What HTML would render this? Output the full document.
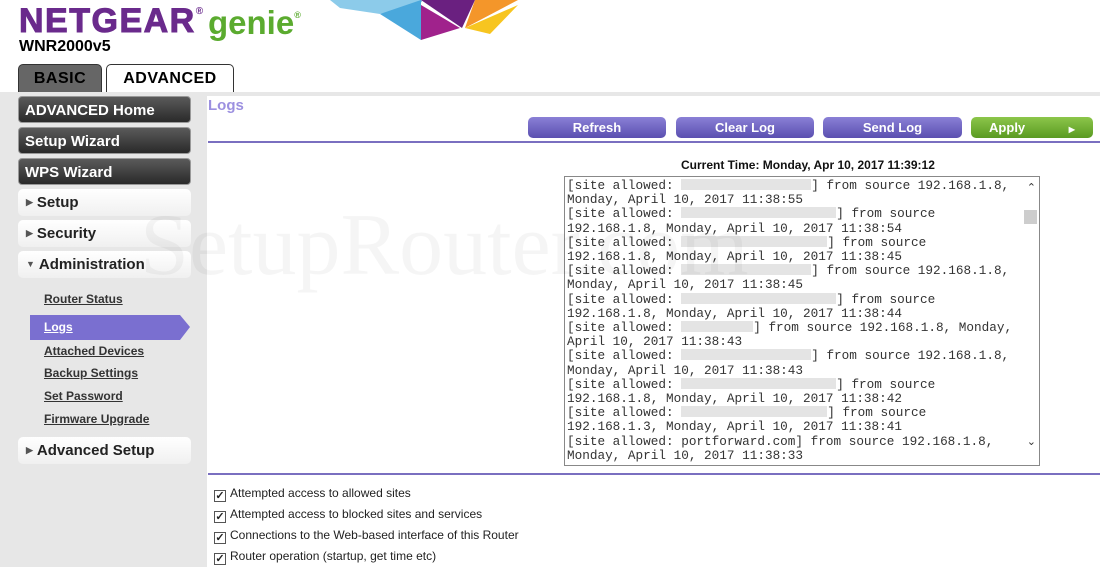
<!DOCTYPE html>
<html><head><meta charset="utf-8"><style>
*{margin:0;padding:0;box-sizing:border-box}
body{width:1100px;height:567px;overflow:hidden;background:#fff;font-family:"Liberation Sans",Arial,sans-serif;position:relative}
.a{position:absolute}
.logo{left:19px;top:2px;font-size:34px;font-weight:bold;color:#6a2a8c;letter-spacing:1.5px;-webkit-text-stroke:1px #6a2a8c}
.genie{left:208px;top:4px;font-size:33px;font-weight:bold;color:#5bab2f}
.model{left:19px;top:38px;font-size:16px;font-weight:bold;color:#000}
.tab{top:64px;height:30px;border:1px solid #333;border-bottom:none;border-radius:5px 5px 0 0;font-weight:bold;font-size:16px;text-align:center;line-height:28px;letter-spacing:0.5px}
.side{left:0;top:93px;width:207px;height:474px;background:#e7e7e7}
.topline{left:0;top:92px;width:1100px;height:4px;background:#e7e7e7}
.db{left:18px;width:173px;height:27px;border-radius:4px;background:linear-gradient(#5a5a5a,#2a2a2a);color:#fff;font-weight:bold;font-size:15px;line-height:27px;padding-left:6px;border:1px solid #999}
.wb{left:18px;width:173px;height:27px;border-radius:5px;background:linear-gradient(#fff,#f0f0f0);color:#222;font-weight:bold;font-size:15px;line-height:27px;padding-left:8px}
.wb i{font-style:normal;font-size:9px;color:#555;margin-right:4px;vertical-align:2px}
.sub{left:44px;font-size:12px;font-weight:bold;color:#333;text-decoration:underline}
.btn{top:117px;height:21px;border-radius:5px;color:#fff;font-weight:bold;font-size:13px;text-align:center;line-height:21px;background:linear-gradient(#8a80d6,#5a4fb0)}
.log{left:564px;top:176px;width:476px;height:290px;border:1px solid #888;overflow:hidden}
pre{font-family:"Liberation Mono",monospace;font-size:12.7px;line-height:14.2px;color:#333;padding:2px 0 0 2px}
.bl{display:inline-block;background:#e4e4e4;height:11px;vertical-align:-1px}
.cb{left:214px;font-size:12px;color:#222}
.cb b{display:inline-block;width:12px;height:12px;border:1px solid #555;vertical-align:-2px;margin-right:4px;font-size:11px;line-height:10px;text-align:center;font-weight:bold;background:#fff}
</style></head><body>
<svg class="a" style="left:330px;top:0" width="200" height="45">
<polygon points="0,0 92,0 92,2 50,14 10,8" fill="#8ccbea"/>
<polygon points="50,14 91,0 91,40" fill="#4aa8dc"/>
<polygon points="91,5 130,28 91,40" fill="#a0228c"/>
<polygon points="91,0 145,0 132,28" fill="#6a2080"/>
<polygon points="145,0 188,0 135,28" fill="#f4962a"/>
<polygon points="135,28 188,5 160,34" fill="#f7c520"/>
</svg>
<div class="a logo">NETGEAR<sup style="font-size:10px;vertical-align:18px;-webkit-text-stroke:0">®</sup></div>
<div class="a genie">genie<sup style="font-size:9px;vertical-align:16px">®</sup></div>
<div class="a model">WNR2000v5</div>
<div class="a tab" style="left:18px;width:84px;background:#666;color:#000">BASIC</div>
<div class="a tab" style="left:106px;width:128px;background:#fff;color:#000">ADVANCED</div>
<div class="a topline"></div>
<div class="a side"></div>
<div class="a db" style="top:96px">ADVANCED Home</div>
<div class="a db" style="top:127px">Setup Wizard</div>
<div class="a db" style="top:158px">WPS Wizard</div>
<div class="a wb" style="top:189px"><i>▶</i>Setup</div>
<div class="a wb" style="top:220px"><i>▶</i>Security</div>
<div class="a wb" style="top:251px"><i>▼</i>Administration</div>
<div class="a sub" style="top:292px">Router Status</div>
<svg class="a" style="left:30px;top:315px" width="161" height="25"><polygon points="0,0 150,0 160,12 150,25 0,25" fill="#7a6fd0"/></svg>
<div class="a sub" style="top:320px;color:#fff">Logs</div>
<div class="a sub" style="top:344px">Attached Devices</div>
<div class="a sub" style="top:366px">Backup Settings</div>
<div class="a sub" style="top:389px">Set Password</div>
<div class="a sub" style="top:412px">Firmware Upgrade</div>
<div class="a wb" style="top:437px"><i>▶</i>Advanced Setup</div>
<div class="a" style="left:208px;top:97px;font-size:15px;font-weight:bold;color:#9c90e0">Logs</div>
<div class="a btn" style="left:528px;width:138px">Refresh</div>
<div class="a btn" style="left:676px;width:138px">Clear Log</div>
<div class="a btn" style="left:823px;width:139px">Send Log</div>
<div class="a btn" style="left:971px;width:122px;background:linear-gradient(#8cc64a,#5a9a22)">Apply <span style="font-size:8px;margin-left:40px">▶</span></div>
<div class="a" style="left:208px;top:141px;width:892px;height:2px;background:#7a6fc0"></div>
<div class="a" style="left:681px;top:158px;font-size:12px;font-weight:bold;color:#111">Current Time: Monday, Apr 10, 2017 11:39:12</div>
<div class="a log"><pre>[site allowed: <span class="bl" style="width:130px"></span>] from source 192.168.1.8,
Monday, April 10, 2017 11:38:55
[site allowed: <span class="bl" style="width:155px"></span>] from source
192.168.1.8, Monday, April 10, 2017 11:38:54
[site allowed: <span class="bl" style="width:146px"></span>] from source
192.168.1.8, Monday, April 10, 2017 11:38:45
[site allowed: <span class="bl" style="width:130px"></span>] from source 192.168.1.8,
Monday, April 10, 2017 11:38:45
[site allowed: <span class="bl" style="width:155px"></span>] from source
192.168.1.8, Monday, April 10, 2017 11:38:44
[site allowed: <span class="bl" style="width:72px"></span>] from source 192.168.1.8, Monday,
April 10, 2017 11:38:43
[site allowed: <span class="bl" style="width:130px"></span>] from source 192.168.1.8,
Monday, April 10, 2017 11:38:43
[site allowed: <span class="bl" style="width:155px"></span>] from source
192.168.1.8, Monday, April 10, 2017 11:38:42
[site allowed: <span class="bl" style="width:146px"></span>] from source
192.168.1.3, Monday, April 10, 2017 11:38:41
[site allowed: portforward.com] from source 192.168.1.8,
Monday, April 10, 2017 11:38:33</pre>
<div class="a" style="right:0;top:0;width:17px;height:288px;background:#fff"></div>
<div class="a" style="right:3px;top:4px;font-size:11px;color:#333">&#8963;</div>
<div class="a" style="right:2px;top:33px;width:13px;height:14px;background:#cdcdcd"></div>
<div class="a" style="right:3px;top:258px;font-size:11px;color:#333">&#8964;</div>
</div>
<div class="a" style="left:208px;top:473px;width:892px;height:2px;background:#7a6fc0"></div>
<div class="a cb" style="top:486px"><b>✓</b>Attempted access to allowed sites</div>
<div class="a cb" style="top:507px"><b>✓</b>Attempted access to blocked sites and services</div>
<div class="a cb" style="top:528px"><b>✓</b>Connections to the Web-based interface of this Router</div>
<div class="a cb" style="top:549px"><b>✓</b>Router operation (startup, get time etc)</div>
<div class="a" style="left:140px;top:195px;font-family:'Liberation Serif',serif;font-size:88px;color:rgba(0,0,0,0.04);pointer-events:none">SetupRouter.com</div>
</body></html>
